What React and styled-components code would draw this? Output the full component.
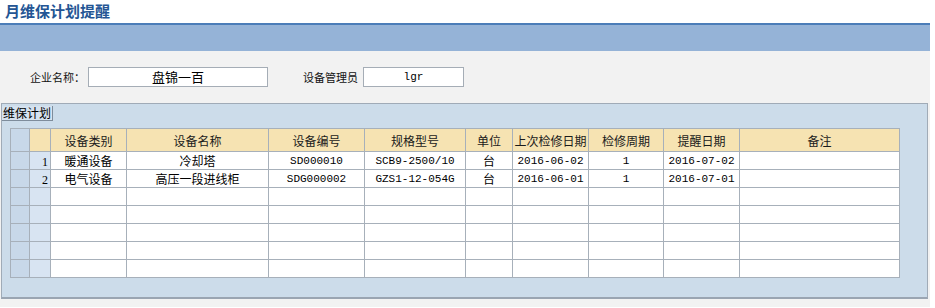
import React from 'react';
import styled, { createGlobalStyle } from 'styled-components';

const GlobalStyle = createGlobalStyle`
  body {
    margin: 0;
    background: #ffffff;
    font-family: "Noto Sans CJK SC", "Liberation Sans", sans-serif;
    font-size: 12px;
    color: #000;
  }
`;

const Page = styled.div`
  width: 930px;
`;

const Title = styled.h1`
  margin: 0;
  height: 23px;
  padding-left: 5px;
  font-size: 15px;
  line-height: 22px;
  font-weight: bold;
  color: #245594;
  border-bottom: 2px solid #4b7db8;
`;

const Band = styled.div`
  height: 26px;
  background: #95b3d7;
`;

const Body = styled.div`
  background: #f2f2f2;
  padding-bottom: 8px;
`;

const FormRow = styled.div`
  display: flex;
  align-items: center;
  height: 52px;
  padding-left: 30px;
`;

const Label = styled.span`
  font-size: 11px;
  margin-right: ${p => p.gap}px;
  color: #111;
`;

const Field = styled.div`
  width: ${p => p.w}px;
  height: 18px;
  margin-right: ${p => p.after || 0}px;
  background: #fff;
  border: 1px solid #a5adb6;
  text-align: center;
  line-height: 18px;
  font-size: ${p => (p.mono ? '11px' : '13px')};
  font-family: ${p => (p.mono ? '"Liberation Mono", monospace' : '"Noto Sans CJK SC", sans-serif')};
`;

const Panel = styled.div`
  margin-left: 1px;
  width: 925px;
  height: 193px;
  background: #ccdcea;
  border: 1px solid #a0abb7;
  border-bottom: 2px solid #9aa5b2;
`;

const Tab = styled.div`
  display: inline-block;
  height: 14px;
  padding: 0 1px;
  line-height: 13px;
  font-size: 12px;
  background: #d5e2ef;
  border-right: 1px solid #7e8c9b;
  border-bottom: 1px solid #7e8c9b;
`;

const Grid = styled.table`
  margin: 7px 0 0 8px;
  border-collapse: collapse;
  table-layout: fixed;
  width: 889px;
  td, th {
    border: 1px solid #a7b0ba;
    padding: 0;
    font-weight: normal;
    overflow: hidden;
    white-space: nowrap;
  }
`;

const HeadCell = styled.th`
  height: 22px;
  background: ${p => (p.blank ? '#c8d8e9' : '#f6e3b2')};
  text-align: center;
  font-size: 12px;
  color: #1a1a1a;
`;

const Cell = styled.td`
  height: 17px;
  background: #fff;
  text-align: center;
  font-size: ${p => (p.mono ? '11px' : '12px')};
  font-family: ${p => (p.mono ? '"Liberation Mono", monospace' : '"Noto Sans CJK SC", sans-serif')};
  line-height: 16px;
`;

const SideCell = styled.td`
  height: 17px;
  background: #c8d8e9;
`;

const NumCell = styled.td`
  height: 17px;
  background: #d8e4f2;
  text-align: right;
  vertical-align: bottom;
  padding-right: 2px !important;
  font-family: "Liberation Serif", serif;
  font-size: 12px;
  line-height: 13px;
`;

const widths = [19, 21, 76, 142, 96, 101, 47, 76, 75, 76, 160];
const heads = ['设备类别', '设备名称', '设备编号', '规格型号', '单位', '上次检修日期', '检修周期', '提醒日期', '备注'];
const monoCols = [2, 3, 5, 6, 7];

const rows = [
  ['暖通设备', '冷却塔', 'SD000010', 'SCB9-2500/10', '台', '2016-06-02', '1', '2016-07-02', ''],
  ['电气设备', '高压一段进线柜', 'SDG000002', 'GZS1-12-054G', '台', '2016-06-01', '1', '2016-07-01', ''],
];

function App() {
  const all = [...rows];
  while (all.length < 7) all.push(Array(9).fill(''));

  return (
    <Page>
      <GlobalStyle />
      <Title>月维保计划提醒</Title>
      <Band />
      <Body>
        <FormRow>
          <Label gap={3}>企业名称：</Label>
          <Field w={178} after={35}>盘锦一百</Field>
          <Label gap={5}>设备管理员</Label>
          <Field w={99} mono>lgr</Field>
        </FormRow>
        <Panel>
          <Tab>维保计划</Tab>
          <Grid>
            <colgroup>
              {widths.map((w, i) => <col key={i} style={{ width: w }} />)}
            </colgroup>
            <thead>
              <tr>
                <HeadCell blank />
                <HeadCell />
                {heads.map(h => <HeadCell key={h}>{h}</HeadCell>)}
              </tr>
            </thead>
            <tbody>
              {all.map((r, i) => (
                <tr key={i}>
                  <SideCell />
                  <NumCell>{i < rows.length ? i + 1 : ''}</NumCell>
                  {r.map((v, j) => (
                    <Cell key={j} mono={monoCols.includes(j)}>{v}</Cell>
                  ))}
                </tr>
              ))}
            </tbody>
          </Grid>
        </Panel>
      </Body>
    </Page>
  );
}

export default App;
